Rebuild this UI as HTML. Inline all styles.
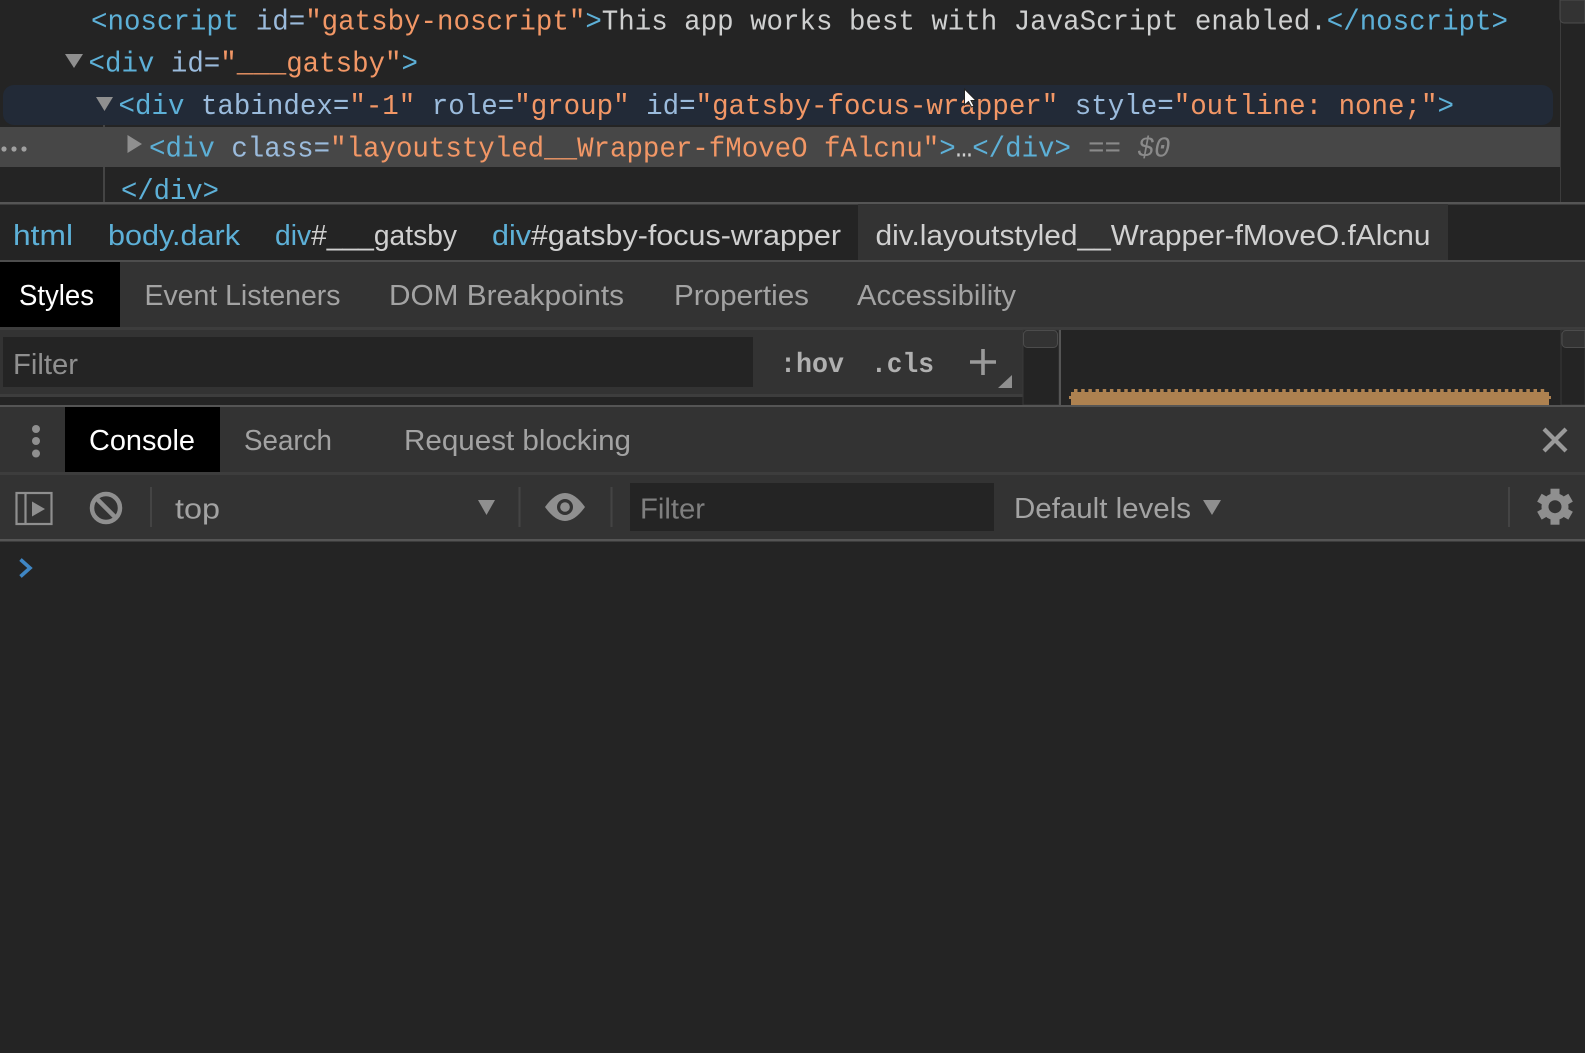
<!DOCTYPE html>
<html lang="en">
<head>
<meta charset="utf-8">
<title>DevTools</title>
<style>
html,body{margin:0;padding:0;background:#242424;width:1585px;height:1053px;overflow:hidden}
svg{display:block}
text{white-space:pre}
.m{font-family:"Liberation Mono",monospace;font-size:29px}
.s{font-family:"Liberation Sans",sans-serif;font-size:28.5px}
.t{fill:#5db0d7}.a{fill:#9bbbdc}.v{fill:#f29766}.x{fill:#cfd0d0}.g{fill:#a3a3a3}.w{fill:#fff}.c{fill:#d0d0d0}.f{fill:#8a8a8a}
</style>
</head>
<body>
<svg xmlns="http://www.w3.org/2000/svg" width="1585" height="1053" viewBox="0 0 1585 1053">
<rect width="1585" height="1053" fill="#242424"/>

<!-- elements pane -->
<rect x="3" y="85" width="1550" height="40" rx="11" fill="#222a37"/>
<rect x="0" y="127" width="1560" height="40" fill="#474747"/>
<rect x="103" y="125" width="2" height="2" fill="#444"/>
<rect x="103" y="167" width="2" height="35" fill="#444"/>
<rect x="1560" y="0" width="1" height="202" fill="#3c3c3c"/>
<path d="M1560 0V19a4 4 0 0 0 4 4H1585V0Z" fill="#333" stroke="#4c4c4c"/>

<text class="m" y="29.500" x="91" textLength="1417" lengthAdjust="spacingAndGlyphs"><tspan class="t">&lt;noscript</tspan><tspan class="a"> id=</tspan><tspan class="v">"gatsby-noscript"</tspan><tspan class="t">&gt;</tspan><tspan class="x">This app works best with JavaScript enabled.</tspan><tspan class="t">&lt;/noscript&gt;</tspan></text>
<path d="M65 54H83L74 68Z" fill="#8f8f8f"/>
<text class="m" y="71.500" x="88.500" textLength="329.500" lengthAdjust="spacingAndGlyphs"><tspan class="t">&lt;div</tspan><tspan class="a"> id=</tspan><tspan class="v">"___gatsby"</tspan><tspan class="t">&gt;</tspan></text>
<path d="M96 97H113L104.500 111Z" fill="#8f8f8f"/>
<text class="m" y="114" x="118.500" textLength="1335.500" lengthAdjust="spacingAndGlyphs"><tspan class="t">&lt;div</tspan><tspan class="a"> tabindex=</tspan><tspan class="v">"-1"</tspan><tspan class="a"> role=</tspan><tspan class="v">"group"</tspan><tspan class="a"> id=</tspan><tspan class="v">"gatsby-focus-wrapper"</tspan><tspan class="a"> style=</tspan><tspan class="v">"outline: none;"</tspan><tspan class="t">&gt;</tspan></text>
<circle cx="4" cy="149" r="2.600" fill="#a0a0a0"/><circle cx="14" cy="149" r="2.600" fill="#a0a0a0"/><circle cx="24" cy="149" r="2.600" fill="#a0a0a0"/>
<path d="M127.500 135L142 144L127.500 153Z" fill="#8f8f8f"/>
<text class="m" y="156.500" x="149" textLength="922" lengthAdjust="spacingAndGlyphs"><tspan class="t">&lt;div</tspan><tspan class="a"> class=</tspan><tspan class="v">"layoutstyled__Wrapper-fMoveO fAlcnu"</tspan><tspan class="t">&gt;</tspan><tspan class="x">…</tspan><tspan class="t">&lt;/div&gt;</tspan></text>
<text class="m f" y="156.500" x="1088" font-style="italic" textLength="82.500" lengthAdjust="spacingAndGlyphs">== $0</text>
<text class="m t" y="199" x="121" textLength="98" lengthAdjust="spacingAndGlyphs">&lt;/div&gt;</text>
<path d="M964.500 89V105L968.500 101.500L971.500 107L974 106L971 100.500H976Z" fill="#fff" stroke="#222" stroke-width="1"/>

<!-- breadcrumbs -->
<rect x="0" y="202" width="1585" height="2.500" fill="#555"/>
<rect x="858" y="204" width="590" height="56" fill="#333"/>
<rect x="0" y="260" width="1585" height="2" fill="#4d4d4d"/>
<g class="s">
<text class="s t" x="13" y="245" textLength="60" lengthAdjust="spacingAndGlyphs">html</text>
<text class="s t" x="108" y="245" textLength="132" lengthAdjust="spacingAndGlyphs">body.dark</text>
<text class="s" x="275" y="245" textLength="182" lengthAdjust="spacingAndGlyphs"><tspan class="t">div</tspan><tspan class="c">#___gatsby</tspan></text>
<text class="s" x="492" y="245" textLength="349" lengthAdjust="spacingAndGlyphs"><tspan class="t">div</tspan><tspan class="c">#gatsby-focus-wrapper</tspan></text>
<text class="s c" x="875.500" y="245" textLength="555" lengthAdjust="spacingAndGlyphs">div.layoutstyled__Wrapper-fMoveO.fAlcnu</text>
</g>

<!-- styles tabs -->
<rect x="0" y="262" width="1585" height="143" fill="#333"/>
<rect x="0" y="262" width="120" height="65" fill="#000"/>
<rect x="0" y="327" width="1585" height="3" fill="#3d3d3d"/>
<text class="s w" x="19" y="305" textLength="75" lengthAdjust="spacingAndGlyphs">Styles</text>
<text class="s g" x="144.500" y="305" textLength="196" lengthAdjust="spacingAndGlyphs">Event Listeners</text>
<text class="s g" x="389" y="305" textLength="235" lengthAdjust="spacingAndGlyphs">DOM Breakpoints</text>
<text class="s g" x="674" y="305" textLength="135" lengthAdjust="spacingAndGlyphs">Properties</text>
<text class="s g" x="857" y="305" textLength="159" lengthAdjust="spacingAndGlyphs">Accessibility</text>

<!-- styles filter -->
<rect x="3" y="337" width="750" height="50" fill="#242424"/>
<text class="s g" x="13" y="374" textLength="65" lengthAdjust="spacingAndGlyphs" style="fill:#8f8f8f">Filter</text>
<text class="m" x="780" y="372" font-weight="700" fill="#b0b0b0" textLength="64" lengthAdjust="spacingAndGlyphs" style="font-size:28px">:hov</text>
<text class="m" x="871" y="372" font-weight="700" fill="#b0b0b0" textLength="63" lengthAdjust="spacingAndGlyphs" style="font-size:28px">.cls</text>
<path d="M983 349V375M970 362H996" stroke="#9a9a9a" stroke-width="3.600" fill="none"/>
<path d="M1012 375V388H998Z" fill="#8f8f8f"/>
<rect x="0" y="394" width="1023" height="3" fill="#3d3d3d"/>
<rect x="0" y="397" width="1023" height="8" fill="#242424"/>

<!-- box model area -->
<rect x="1023" y="330" width="36" height="75" fill="#242424" stroke="#383838"/>
<rect x="1023.500" y="330.500" width="34" height="17" rx="4" fill="#333" stroke="#4c4c4c"/>
<rect x="1059" y="330" width="2" height="75" fill="#555"/>
<rect x="1061" y="330" width="500" height="75" fill="#242424"/>
<rect x="1561" y="330" width="24" height="75" fill="#242424" stroke="#383838"/>
<path d="M1585 330.500H1566a4 4 0 0 0 -4 4V343.500a4 4 0 0 0 4 4H1585Z" fill="#333" stroke="#4c4c4c"/>
<path d="M1071 392H1549V396H1551V399H1549V405H1071V399H1069V396H1071Z" fill="#ad8150"/>
<line x1="1074" y1="390.500" x2="1547" y2="390.500" stroke="#ad8150" stroke-width="3" stroke-dasharray="3.500 3.680"/>

<!-- console tabs -->
<rect x="0" y="405" width="1585" height="2.500" fill="#555"/>
<rect x="0" y="407" width="1585" height="132" fill="#333"/>
<rect x="65" y="407" width="155" height="65" fill="#000"/>
<rect x="0" y="472" width="1585" height="3" fill="#3d3d3d"/>
<circle cx="36" cy="429" r="4" fill="#8f8f8f"/><circle cx="36" cy="441" r="4" fill="#8f8f8f"/><circle cx="36" cy="453.500" r="4" fill="#8f8f8f"/>
<text class="s w" x="89" y="450" textLength="106" lengthAdjust="spacingAndGlyphs">Console</text>
<text class="s g" x="244" y="450" textLength="88" lengthAdjust="spacingAndGlyphs">Search</text>
<text class="s g" x="404" y="450" textLength="227" lengthAdjust="spacingAndGlyphs">Request blocking</text>
<path d="M1544 429L1566 451M1566 429L1544 451" stroke="#9a9a9a" stroke-width="4.200" fill="none"/>

<!-- console toolbar -->
<rect x="16.500" y="493" width="35" height="31" fill="none" stroke="#8f8f8f" stroke-width="2.200"/>
<line x1="25.500" y1="493" x2="25.500" y2="524" stroke="#8f8f8f" stroke-width="2.200"/>
<path d="M32 501.500L45 509L32 516.500Z" fill="#8f8f8f"/>
<circle cx="106" cy="508" r="14" fill="none" stroke="#8f8f8f" stroke-width="4.500"/>
<line x1="96" y1="498" x2="116" y2="518" stroke="#8f8f8f" stroke-width="4.500"/>
<rect x="150" y="487" width="2" height="40" fill="#444"/>
<text class="s g" x="175" y="518.500" textLength="45" lengthAdjust="spacingAndGlyphs">top</text>
<path d="M478 500H495L486.500 515Z" fill="#8f8f8f"/>
<rect x="518.500" y="487" width="2" height="40" fill="#444"/>
<path d="M545 507Q565 479 585 507Q565 535 545 507Z" fill="#8f8f8f"/>
<circle cx="565" cy="507" r="8" fill="#333"/><circle cx="565" cy="507" r="4.800" fill="#8f8f8f"/>
<rect x="610.500" y="487" width="2" height="40" fill="#444"/>
<rect x="630" y="483" width="364" height="48" fill="#242424"/>
<text class="s" x="640" y="518.500" textLength="65" lengthAdjust="spacingAndGlyphs" fill="#7f7f7f">Filter</text>
<text class="s g" x="1014" y="518" textLength="177" lengthAdjust="spacingAndGlyphs">Default levels</text>
<path d="M1203 500H1221L1212 515Z" fill="#8f8f8f"/>
<rect x="1508" y="487" width="2" height="40" fill="#444"/>
<g fill="#8f8f8f" transform="translate(1555 506.700)">
<circle r="13.500"/>
<rect x="-4.500" y="-18" width="9" height="36"/>
<rect x="-4.500" y="-18" width="9" height="36" transform="rotate(60)"/>
<rect x="-4.500" y="-18" width="9" height="36" transform="rotate(120)"/>
<circle r="6.500" fill="#333"/>
</g>
<rect x="0" y="539" width="1585" height="2.500" fill="#555"/>

<!-- prompt -->
<path d="M20.500 559.500L30 568L20.500 576.500" fill="none" stroke="#3f86c4" stroke-width="3.600"/>
</svg>
</body>
</html>
